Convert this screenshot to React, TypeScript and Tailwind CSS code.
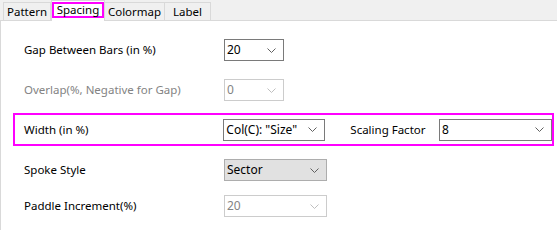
import React from 'react';

type ComboProps = {
  value: string;
  width: string;
  variant?: 'normal' | 'disabled' | 'button';
};

function Chevron({ disabled }: { disabled?: boolean }) {
  return (
    <svg width="9" height="5" viewBox="0 0 9 5" className="shrink-0">
      <path d="M0.5 0.5 L4.5 4.5 L8.5 0.5" fill="none" stroke={disabled ? '#bfbfbf' : '#606060'} strokeWidth="1" />
    </svg>
  );
}

function Combo({ value, width, variant = 'normal' }: ComboProps) {
  const styles = {
    normal: 'border-[#7a7a7a] bg-white text-black',
    disabled: 'border-[#cccccc] bg-white text-[#838383]',
    button: 'border-[#adadad] bg-[#e1e1e1] text-black',
  }[variant];
  return (
    <div className={`${width} h-[22px] border flex items-center justify-between pl-[2px] pr-[7px] shrink-0 ${styles}`}>
      <span className="leading-none text-[12px]">{value}</span>
      <Chevron disabled={variant === 'disabled'} />
    </div>
  );
}

function Row({ label, children, disabled, className = '' }: { label: string; children: React.ReactNode; disabled?: boolean; className?: string }) {
  return (
    <div className={`flex items-center pl-[23px] ${className}`}>
      <div className={`w-[200px] ${disabled ? 'text-[#838383]' : 'text-black'}`}>{label}</div>
      {children}
    </div>
  );
}

export default function App() {
  const tabs = [
    { name: 'Pattern', w: 'w-[48px]' },
    { name: 'Spacing', w: 'w-[54px]', active: true },
    { name: 'Colormap', w: 'w-[60px]' },
    { name: 'Label', w: 'w-[46px]' },
  ];

  return (
    <div className="w-[557px] h-[230px] bg-white overflow-hidden text-[11.5px] font-['Segoe_UI','Noto_Sans',sans-serif]">
      {/* tab strip */}
      <div className="h-[21px] bg-[#f0f0f0] border-b border-[#d9d9d9] flex items-end pl-[3px]">
        {tabs.map((t) =>
          t.active ? (
            <div key={t.name} className={`${t.w} h-[21px] -mb-px bg-white border border-b-0 border-[#d9d9d9] flex items-start justify-center pt-[1px]`}>
              <div className="w-[52px] h-[16px] border-2 border-[#ff00ff] flex items-center justify-center leading-none">
                {t.name}
              </div>
            </div>
          ) : (
            <div key={t.name} className={`${t.w} h-[18px] border border-b-0 border-l-0 first:border-l border-[#d9d9d9] flex items-center justify-center leading-none`}>
              {t.name}
            </div>
          )
        )}
      </div>

      {/* page */}
      <div className="h-[209px] border-l border-[#d9d9d9] pt-[18px]">
        <Row label="Gap Between Bars (in %)">
          <Combo value="20" width="w-[60px]" />
        </Row>
        <Row label="Overlap(%, Negative for Gap)" disabled className="mt-[18px]">
          <Combo value="0" width="w-[60px]" variant="disabled" />
        </Row>

        <div className="ml-[12px] mt-[12px] w-[541px] h-[33px] border-2 border-[#ff00ff] flex items-center pl-[9px]">
          <div className="w-[200px]">Width (in %)</div>
          <Combo value='Col(C): "Size"' width="w-[102px]" />
          <div className="ml-[25px] w-[89px]">Scaling Factor</div>
          <Combo value="8" width="w-[113px]" />
        </div>

        <Row label="Spoke Style" className="mt-[13px]">
          <Combo value="Sector" width="w-[103px]" variant="button" />
        </Row>
        <Row label="Paddle Increment(%)" className="mt-[14px]">
          <Combo value="20" width="w-[103px]" variant="disabled" />
        </Row>
      </div>
    </div>
  );
}
